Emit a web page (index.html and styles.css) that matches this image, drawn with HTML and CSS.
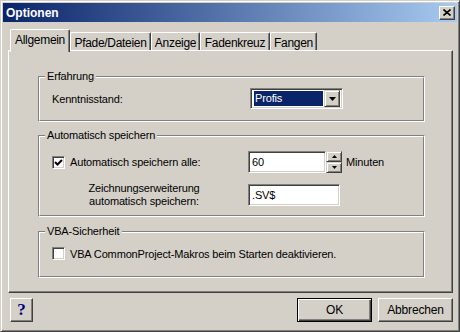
FILE: index.html
```html
<!DOCTYPE html>
<html lang="de">
<head>
    <meta charset="UTF-8">
    <title>Optionen</title>
    <link rel="stylesheet" href="styles.css">
</head>
<body>
    <div class="window">
        <div class="titlebar">
            <span class="title">Optionen</span>
            <span class="close-btn">
                <svg width="8" height="7" viewBox="0 0 8 7"><path d="M0.5 0.5 L7.5 6.5 M7.5 0.5 L0.5 6.5" stroke="#000" stroke-width="1.6"/></svg>
            </span>
        </div>
        <div class="dialog-body">
            <div class="tabs">
                <div class="tab active tab-allgemein">Allgemein</div>
                <div class="tab tab-pfade">Pfade/Dateien</div>
                <div class="tab tab-anzeige">Anzeige</div>
                <div class="tab tab-faden">Fadenkreuz</div>
                <div class="tab tab-fangen">Fangen</div>
            </div>
            <div class="panel">
                <div class="group group-erfahrung">
                    <div class="group-inner">
                        <div class="legend">Erfahrung</div>
                        <div class="group-body">
                            <div class="field-row">
                                <span class="label-wide">Kenntnisstand:</span>
                                <div class="combo">
                                    <span class="combo-value">Profis</span>
                                    <span class="combo-btn">
                                        <svg width="7" height="4" viewBox="0 0 7 4"><path d="M0 0 H7 L3.5 4 Z" fill="#000"/></svg>
                                    </span>
                                </div>
                            </div>
                        </div>
                    </div>
                </div>

                <div class="group group-speichern">
                    <div class="group-inner">
                        <div class="legend">Automatisch speichern</div>
                        <div class="group-body save-grid">
                            <label class="check-label">
                                <span class="checkbox">
                                    <svg width="9" height="9" viewBox="0 0 9 9"><path d="M1 4 L3.5 6.5 L8 2" fill="none" stroke="#000" stroke-width="2"/></svg>
                                </span>
                                Automatisch speichern alle:
                            </label>
                            <div class="spin-field">
                                <span class="textbox textbox-minutes">60</span>
                                <span class="spin">
                                    <span class="spin-btn"><svg width="5" height="3" viewBox="0 0 5 3"><path d="M2.5 0 L5 3 H0 Z" fill="#000"/></svg></span>
                                    <span class="spin-btn"><svg width="5" height="3" viewBox="0 0 5 3"><path d="M0 0 H5 L2.5 3 Z" fill="#000"/></svg></span>
                                </span>
                                <span class="unit">Minuten</span>
                            </div>
                            <div class="two-line">Zeichnungserweiterung<br>automatisch speichern:</div>
                            <div><span class="textbox textbox-ext">.SV$</span></div>
                        </div>
                    </div>
                </div>

                <div class="group group-vba">
                    <div class="group-inner">
                        <div class="legend">VBA-Sicherheit</div>
                        <div class="group-body">
                            <label class="check-label">
                                <span class="checkbox"></span>
                                VBA CommonProject-Makros beim Starten deaktivieren.
                            </label>
                        </div>
                    </div>
                </div>
            </div>
            <div class="buttons">
                <span class="btn btn-help">?</span>
                <span class="btn btn-default">OK</span>
                <span class="btn">Abbrechen</span>
            </div>
        </div>
    </div>
</body>
</html>
```

FILE: styles.css
```css
* {
    box-sizing: border-box;
}
body {
    margin: 0;
    font-family: "Liberation Sans", Arial, sans-serif;
    font-size: 11px;
    letter-spacing: -0.15px;
    color: #000;
    background: #d4d0c8;
}
.window {
    width: 460px;
    height: 332px;
    border: 1px solid;
    border-color: #d4d0c8 #404040 #404040 #d4d0c8;
    box-shadow: inset 1px 1px #fff, inset -1px -1px #808080;
    padding: 2px;
    background: #d4d0c8;
}
.titlebar {
    height: 19px;
    background: linear-gradient(90deg, #0a246a 0%, #a6caf0 100%);
    display: flex;
    align-items: center;
    justify-content: space-between;
    padding: 0 2px 0 3px;
}
.title {
    color: #fff;
    font: bold 12px "Liberation Sans", Arial, sans-serif;
    letter-spacing: 0;
}
.close-btn {
    width: 16px;
    height: 14px;
    background: #d4d0c8;
    border: 1px solid;
    border-color: #fff #404040 #404040 #fff;
    box-shadow: inset -1px -1px #808080;
    display: flex;
    align-items: center;
    justify-content: center;
}
.dialog-body {
    padding: 7px 4px 0 5px;
}

/* tabs */
.tabs {
    display: flex;
    align-items: flex-end;
    height: 21px;
    padding-left: 2px;
    position: relative;
    z-index: 1;
}
.tab {
    height: 18px;
    border: 1px solid;
    border-bottom: none;
    border-color: #fff #404040 #fff #fff;
    border-radius: 2px 2px 0 0;
    box-shadow: inset -1px 0 #808080;
    display: flex;
    align-items: center;
    justify-content: center;
    padding-top: 2px;
    background: #d4d0c8;
    font-size: 12px;
    letter-spacing: -0.3px;
}
.tab.active {
    height: 23px;
    margin-bottom: -2px;
    padding-top: 0;
    padding-bottom: 2px;
}
.tab-allgemein { width: 60px; }
.tab-pfade { width: 81px; }
.tab-anzeige { width: 49px; }
.tab-faden { width: 70px; }
.tab-fangen { width: 47px; }

.panel {
    width: 445px;
    height: 243px;
    border: 1px solid;
    border-color: #fff #404040 #404040 #fff;
    box-shadow: inset -1px -1px #808080;
    padding: 0 27px 0 29px;
    display: flow-root;
}

/* group boxes */
.group {
    border: 1px solid;
    border-color: #808080 #fff #fff #808080;
}
.group-inner {
    border: 1px solid;
    border-color: #fff #808080 #808080 #fff;
    display: flow-root;
}
.legend {
    display: table;
    margin: -9px 0 -5px 5px;
    padding: 0 2px;
    line-height: 14px;
    background: #d4d0c8;
}
.group-body {
    padding-left: 12px;
}
.group-erfahrung {
    margin-top: 25px;
}
.group-erfahrung .group-body {
    padding-top: 10px;
    padding-bottom: 11px;
}
.group-speichern {
    margin-top: 13px;
}
.group-speichern .group-body {
    padding-top: 14px;
    padding-bottom: 9px;
}
.group-vba {
    margin-top: 14px;
}
.group-vba .group-body {
    padding-top: 14px;
    padding-bottom: 16px;
}

.field-row {
    display: flex;
    align-items: center;
    height: 21px;
}
.label-wide {
    width: 198px;
}

/* combo box */
.combo {
    width: 93px;
    height: 21px;
    border: 1px solid;
    border-color: #808080 #fff #fff #808080;
    box-shadow: inset 1px 1px #404040, inset -1px -1px #d4d0c8;
    background: #fff;
    display: flex;
    align-items: center;
    padding: 2px;
}
.combo-value {
    flex: 1;
    height: 15px;
    margin: 0 1px;
    background: #0a246a;
    color: #fff;
    line-height: 15px;
    padding-left: 1px;
}
.combo-btn {
    width: 16px;
    height: 17px;
    background: #d4d0c8;
    border: 1px solid;
    border-color: #d4d0c8 #404040 #404040 #d4d0c8;
    box-shadow: inset 1px 1px #fff, inset -1px -1px #808080;
    display: flex;
    align-items: center;
    justify-content: center;
}

/* auto save */
.save-grid {
    display: grid;
    grid-template-columns: 196px auto;
    grid-template-rows: 22px 22px;
    row-gap: 11px;
    align-items: center;
}
.check-label {
    display: flex;
    align-items: center;
    gap: 5px;
    height: 13px;
}
.checkbox {
    width: 13px;
    height: 13px;
    border: 1px solid;
    border-color: #808080 #fff #fff #808080;
    box-shadow: inset 1px 1px #404040, inset -1px -1px #d4d0c8;
    background: #fff;
    display: flex;
    align-items: center;
    justify-content: center;
    flex-shrink: 0;
}
.spin-field {
    display: flex;
    align-items: center;
}
.textbox {
    display: block;
    height: 22px;
    border: 1px solid;
    border-color: #808080 #fff #fff #808080;
    box-shadow: inset 1px 1px #404040, inset -1px -1px #d4d0c8;
    background: #fff;
    line-height: 20px;
    padding-left: 3px;
}
.textbox-minutes {
    width: 78px;
}
.textbox-ext {
    width: 92px;
}
.spin {
    display: flex;
    flex-direction: column;
    width: 16px;
    height: 22px;
}
.spin-btn {
    height: 11px;
    background: #d4d0c8;
    border: 1px solid;
    border-color: #d4d0c8 #404040 #404040 #d4d0c8;
    box-shadow: inset 1px 1px #fff, inset -1px -1px #808080;
    display: flex;
    align-items: center;
    justify-content: center;
}
.unit {
    margin-left: 4px;
}
.two-line {
    text-align: center;
    line-height: 13px;
    padding-right: 12px;
}

/* bottom buttons */
.buttons {
    display: flex;
    gap: 6px;
    padding: 5px 0 0 2px;
}
.btn {
    width: 75px;
    height: 24px;
    border: 1px solid;
    border-color: #fff #404040 #404040 #fff;
    box-shadow: inset -1px -1px #808080;
    display: flex;
    align-items: center;
    justify-content: center;
    background: #d4d0c8;
    font-size: 12px;
}
.btn-help {
    width: 23px;
    margin-right: auto;
    color: #000080;
    font: bold 17px "Liberation Serif", "Times New Roman", serif;
}
.btn-default {
    border-color: #000;
    box-shadow: inset 1px 1px #fff, inset -1px -1px #404040, inset -2px -2px #808080;
}
```
